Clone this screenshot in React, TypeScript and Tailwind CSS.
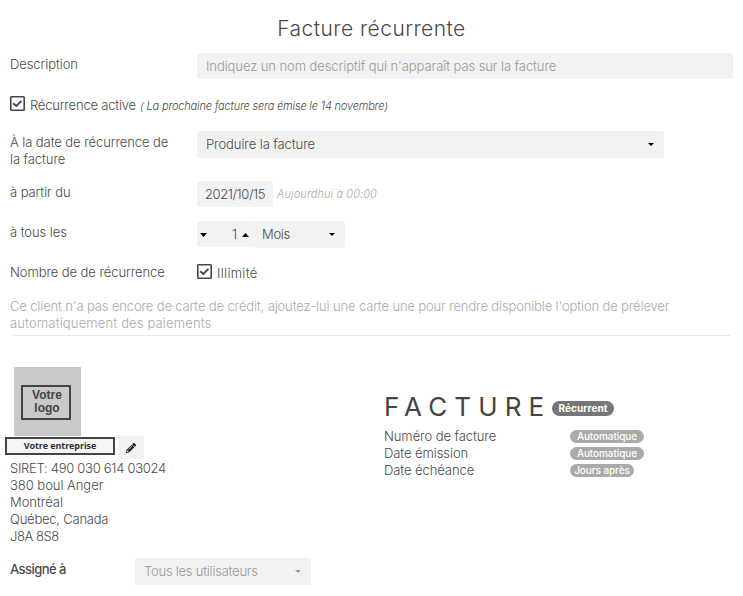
import type { ReactNode } from 'react'
import { FaPencilAlt } from 'react-icons/fa'

const address = [
  { text: 'SIRET: 490 030 614 03024', tracking: 'tracking-[-0.28px]' },
  { text: '380 boul Anger', tracking: 'tracking-[-0.04px]' },
  { text: 'Montréal', tracking: 'tracking-[-0.04px]' },
  { text: 'Québec, Canada', tracking: 'tracking-[-0.22px]' },
  { text: 'J8A 8S8', tracking: 'tracking-[-0.45px]' },
]

const details = [
  { label: 'Numéro de facture', value: 'Automatique', width: 'w-[74px]' },
  { label: 'Date émission', value: 'Automatique', width: 'w-[74px]' },
  { label: 'Date échéance', value: 'Jours après', width: 'w-[64px]' },
]

function CheckBox() {
  return (
    <svg viewBox="0 0 15 15" className="w-[15px] h-[15px] shrink-0" fill="none" stroke="#444">
      <rect x="0.8" y="0.8" width="13.4" height="13.4" rx="0.8" strokeWidth="1.6" />
      <path d="M3.2 7.2 6.3 10l5.2-5.2" strokeWidth="1.9" />
    </svg>
  )
}

function Caret({ className }: { className: string }) {
  return (
    <svg viewBox="0 0 8 4" className={`shrink-0 ${className}`} preserveAspectRatio="none" fill="currentColor">
      <path d="M0 0h8L4 4z" />
    </svg>
  )
}

function Row({ label, className, children }: { label: string; className: string; children: ReactNode }) {
  return (
    <div className={`flex items-start ${className}`}>
      <div className="w-[187px] pr-[22px] pt-[3px] shrink-0">{label}</div>
      {children}
    </div>
  )
}

export default function App() {
  return (
    <div
      className="w-[743px] h-[596px] overflow-hidden bg-white pt-[15px] text-[13px] leading-[17px] font-light tracking-[-0.08px] text-[#4a4a4a]"
      style={{ fontFamily: 'Inter, "Open Sans", sans-serif' }}
    >
      <h1 className="h-[38px] text-center text-[21px] leading-[28px] font-light tracking-[0.45px]">Facture récurrente</h1>

      <div className="pl-[10px]">
        <Row label="Description" className="h-[43px]">
          <div className="w-[536px] h-[26px] rounded-[2px] bg-[#f2f2f2] pl-[9px] leading-[27px] text-[#999]">
            Indiquez un nom descriptif qui n'apparaît pas sur la facture
          </div>
        </Row>

        <div className="flex items-start h-[35px]">
          <CheckBox />
          <span className="w-[110px] pl-[5px] pt-px whitespace-nowrap tracking-[-0.2px]">Récurrence active</span>
          <em className="ml-[5px] pt-[2px] text-[11px] tracking-[-0.18px]">( La prochaine facture sera émise le 14 novembre)</em>
        </div>

        <Row label="À la date de récurrence de la facture" className="h-[50px]">
          <div className="flex items-center justify-between w-[467px] h-[27px] rounded-[2px] bg-[#f2f2f2] pl-[9px] pr-[10px]">
            <span>Produire la facture</span>
            <Caret className="w-[6px] h-[3px] text-black" />
          </div>
        </Row>

        <Row label="à partir du" className="h-[40px]">
          <div className="w-[76px] h-[26px] rounded-[2px] bg-[#f2f2f2] text-center leading-[26px] tracking-[-0.4px]">2021/10/15</div>
          <em className="ml-[4px] pt-[5px] text-[11px] tracking-[0.08px] text-[#aaa]">Aujourdhui à 00:00</em>
        </Row>

        <Row label="à tous les" className="h-[40px]">
          <div className="flex items-center w-[56px] h-[26px] rounded-[2px] bg-[#f2f2f2] pl-[3px] pr-[4px]">
            <Caret className="mt-[2px] w-[7px] h-[4px] text-black" />
            <span className="ml-auto mr-[5px]">1</span>
            <Caret className="mt-[2px] w-[7px] h-[4px] rotate-180 text-black" />
          </div>
          <div className="flex items-center justify-between w-[92px] h-[27px] rounded-[2px] bg-[#f2f2f2] pl-[9px] pr-[10px]">
            <span className="tracking-[-0.3px]">Mois</span>
            <Caret className="w-[6px] h-[3px] text-black" />
          </div>
        </Row>

        <Row label="Nombre de de récurrence" className="h-[37px]">
          <div className="flex items-start pt-[3px]">
            <CheckBox />
            <span className="ml-[5px] pt-px tracking-[0.3px]">Illimité</span>
          </div>
        </Row>

        <p className="w-[700px] h-[37px] text-[#aaa]">
          <span className="tracking-[-0.14px]">
            Ce client n'a pas encore de carte de crédit, ajoutez-lui une carte une pour rendre disponible l'option de prélever
          </span>
          <br />
          <span className="tracking-[0.15px]">automatiquement des paiements</span>
        </p>
      </div>

      <hr className="ml-[13px] w-[717px] border-[#e8e8e8]" />

      <div className="flex items-start pt-[31px]">
        <div className="w-[384px]">
          <div className="flex items-start justify-center ml-[14px] w-[67px] h-[69px] bg-[#c9c9c9] pt-[18px] pr-[3px]">
            <div className="w-[50px] h-[35px] border-2 border-[#444] pt-[2px] pl-[2px] text-center font-['Liberation_Sans'] text-[12px] leading-[13px] font-bold tracking-normal text-[#444]">
              <div>Votre</div>
              <div>logo</div>
            </div>
          </div>
          <div className="flex items-start h-[24px] pl-[5px]">
            <div className="w-[110px] h-[18px] mt-px border-2 border-[#444] bg-[#f5f5f5] text-center font-['Open_Sans'] text-[9px] leading-[14px] font-bold tracking-[-0.1px] text-[#333]">
              Votre entreprise
            </div>
            <div className="flex items-center justify-center ml-[3px] w-[26px] h-[23px] rounded-[2px] bg-[#f2f2f2]">
              <FaPencilAlt className="w-[10px] h-[10px] text-[#111]" />
            </div>
          </div>
          <div className="pl-[10px]">
            {address.map(({ text, tracking }) => (
              <div key={text} className={tracking}>{text}</div>
            ))}
          </div>
        </div>

        <div className="pt-[23px]">
          <div className="flex items-start h-[38px]">
            <h2 className="w-[168px] whitespace-nowrap text-[26px] leading-[33px] font-normal tracking-[7.1px] text-[#444]">FACTURE</h2>
            <span className="mt-[11px] w-[62px] h-[15px] rounded-full bg-[#777] text-center text-[10px] leading-[14px] font-bold tracking-[0.1px] text-white">
              Récurrent
            </span>
          </div>
          {details.map(({ label, value, width }, i) => (
            <div key={i} className="flex items-start h-[17px]">
              <span className="w-[186px]">{label}</span>
              <span className={`mt-[2px] h-[13px] rounded-full bg-[#aaa] text-center text-[10px] leading-[13px] font-medium text-white ${width}`}>
                {value}
              </span>
            </div>
          ))}
        </div>
      </div>

      <div className="flex items-start pl-[10px] pt-[13px]">
        <span className="w-[125px] pt-[3px] font-medium tracking-[-0.55px]">Assigné à</span>
        <div className="flex items-center justify-between w-[176px] h-[27px] rounded-[2px] bg-[#f2f2f2] pl-[9px] pr-[10px] text-[#999]">
          <span className="tracking-[-0.24px]">Tous les utilisateurs</span>
          <Caret className="w-[6px] h-[3px]" />
        </div>
      </div>
    </div>
  )
}
